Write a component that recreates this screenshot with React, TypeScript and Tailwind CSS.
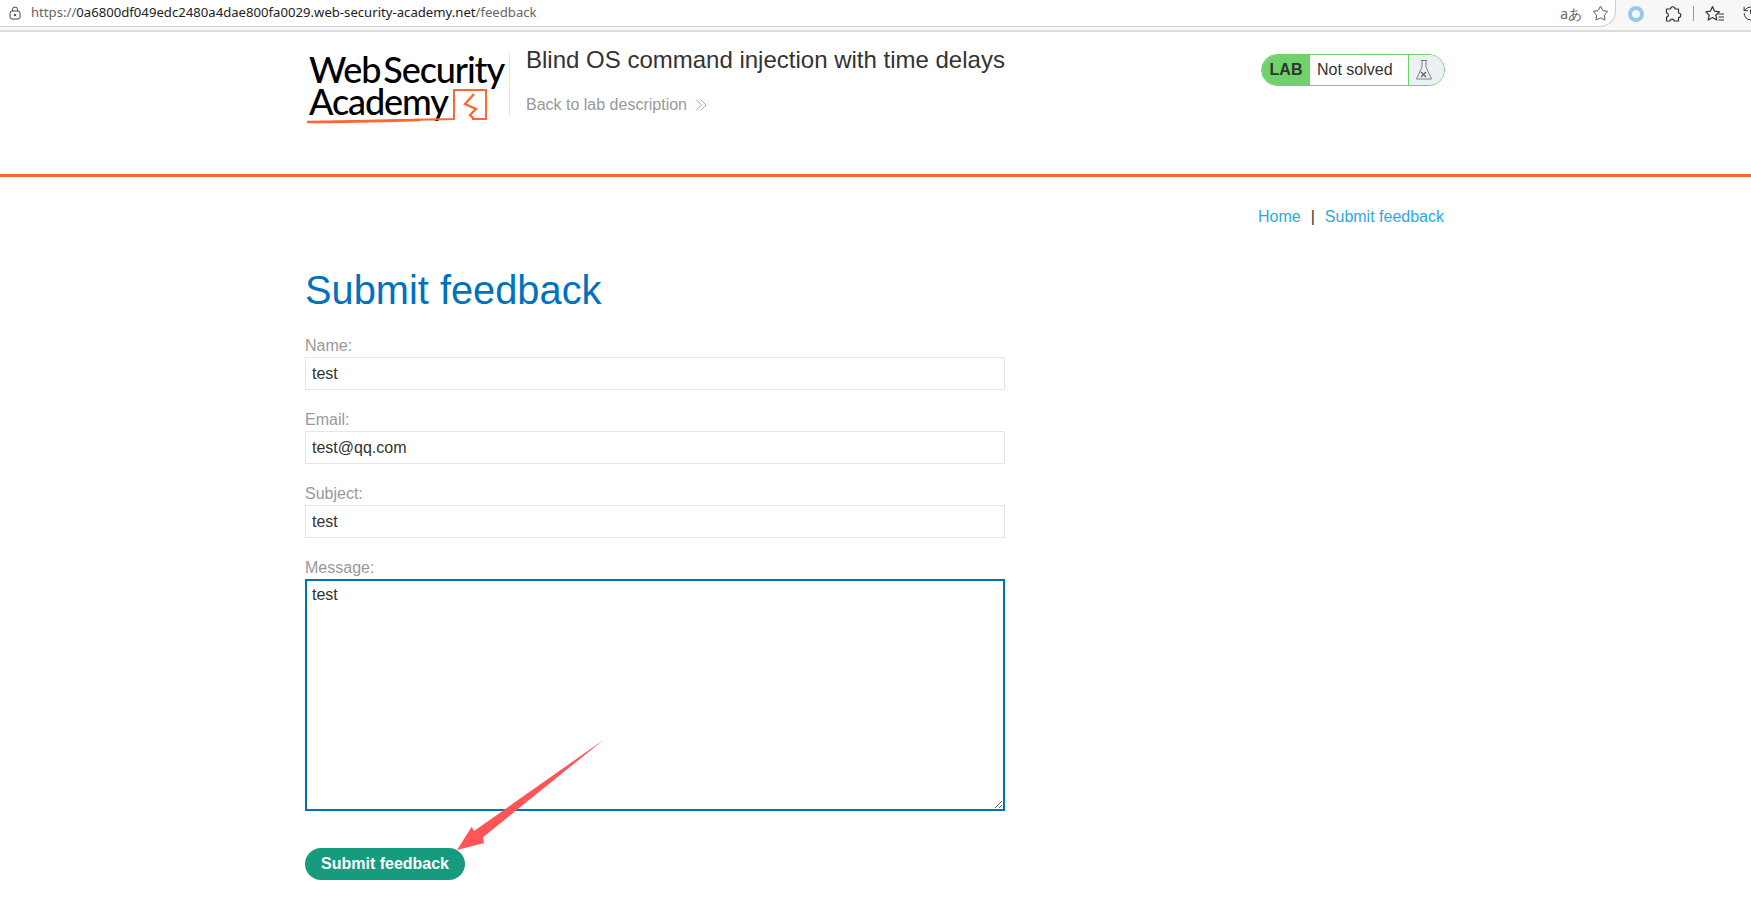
import { Star, History } from "lucide-react";

function Field({ label, value }: { label: string; value: string }) {
  return (
    <div className="mb-[20px]">
      <label className="block text-[16px] leading-[20px] h-[21px] text-[#999]">{label}</label>
      <input
        readOnly
        value={value}
        className="block w-[700px] h-[33px] border border-[#e6e6e6] px-[6px] text-[16px] text-[#333] outline-none"
      />
    </div>
  );
}

function Logo() {
  return (
    <div className="relative w-[198px] h-[70px] text-black font-['Lato',sans-serif] font-medium">
      <div className="text-[36px] leading-[32px] tracking-[-1.1px] [word-spacing:-5px] whitespace-nowrap pl-[4px]">Web Security</div>
      <div className="text-[36px] leading-[32px] tracking-[-1.1px] whitespace-nowrap pl-[4px]">Academy</div>
      <svg className="absolute left-0 top-0" width="198" height="72" viewBox="0 0 198 72" fill="none" stroke="#ff6633">
        <path d="M2 69 C50 68 100 67 149 66 V37 H181 V66 H167" strokeWidth="2" />
        <path d="M2 69 C40 69 80 68 115 67" strokeWidth="2.6" />
        <path d="M169 41 L160 51 L171 56 L165 62 L169 66" strokeWidth="2.4" />
      </svg>
    </div>
  );
}

export default function App() {
  return (
    <div className="relative h-[902px] overflow-hidden bg-white font-['Liberation_Sans',Arial,sans-serif]">
      {/* browser chrome */}
      <div className="flex h-[32px] items-start overflow-hidden bg-[#f7f7f7] border-b-2 border-[#dcdcdc]">
        <div className="flex h-[27px] w-[1616px] shrink-0 items-center rounded-br-[16px] border-b border-r border-[#d0d0d0] bg-white pl-[8px] pr-[6px] font-['Noto_Sans',sans-serif] text-[13.15px]">
          <svg className="mr-[9px]" width="14" height="14" viewBox="0 0 14 14" fill="none" stroke="#444" strokeWidth="1">
            <rect x="2" y="5" width="10" height="8" rx="2" />
            <path d="M4.5 5 V3.5 a2.5 2.5 0 0 1 5 0 V5" />
            <circle cx="7" cy="9" r="0.8" fill="#444" />
          </svg>
          <span className="text-[#666]">https://</span>
          <span className="text-[#222]">0a6800df049edc2480a4dae800fa0029.web-security-academy.net</span>
          <span className="text-[#666]">/feedback</span>
          <span className="ml-auto mr-[10px] text-[14px] text-[#666]">aあ</span>
          <Star size={17} strokeWidth={1.3} className="text-[#444]" />
        </div>
        <div className="flex h-[27px] flex-1 items-center pl-[12px] text-[#333]">
          <span className="h-[16px] w-[16px] shrink-0 rounded-full border-[4px] border-[#93c9f0]" />
          <svg className="ml-[20px] shrink-0" width="18" height="18" viewBox="0 0 18 18" fill="none" stroke="#333" strokeWidth="1.2" strokeLinejoin="round">
            <path d="M6.5 4 C6.5 1 11 1 11 4 H14.5 V8 C17.5 8 17.5 12.5 14.5 12.5 V16 H10 C10 13.5 6 13.5 6 16 H2.5 V12 C5 12 5 8 2.5 8 V4 Z" />
          </svg>
          <span className="ml-[11px] h-[15px] w-px shrink-0 bg-[#999]" />
          <svg className="ml-[11px] shrink-0" width="20" height="18" viewBox="0 0 20 18" fill="none" stroke="#333" strokeWidth="1.2" strokeLinejoin="round">
            <path d="M7.5 1.5 L9.6 6.2 L14.5 6.8 L10.8 10.2 L11.8 15 L7.5 12.6 L3.2 15 L4.2 10.2 L0.8 6.8 L5.4 6.2 Z" />
            <path d="M13.5 9 H19 M13.5 12 H19 M13.5 15 H19" />
          </svg>
          <History size={17} strokeWidth={1.4} className="ml-[17px] shrink-0" />
        </div>
      </div>

      {/* lab header */}
      <header className="h-[145px] border-b-[3px] border-[#ff6633]">
        <div className="ml-[305px] flex w-[1140px] pt-[21px]">
          <Logo />
          <div className="ml-[6px] mt-[1px] h-[62px] border-l border-[#e6e6e6] pl-[16px]">
            <h2 className="-mt-[8px] text-[24px] leading-[28px] text-[#333]">Blind OS command injection with time delays</h2>
            <a className="mt-[21px] flex items-center text-[16px] leading-[20px] text-[#999]">
              Back to lab description
              <svg className="ml-[8px]" width="12" height="12" viewBox="0 0 12 12" fill="none" stroke="#aaa" strokeWidth="1">
                <path d="M1 0.5 L6.5 6 L1 11.5" />
                <path d="M5.5 0.5 L11 6 L5.5 11.5" />
              </svg>
            </a>
          </div>
          <div className="ml-auto mt-[1px] flex h-[32px] w-[184px] overflow-hidden rounded-[16px] border border-[#70d16d] text-[16px]">
            <div className="flex w-[48px] items-center justify-center bg-[#70d16d] font-bold text-[#333]">LAB</div>
            <div className="flex flex-1 items-center pl-[7px] text-[#333]">Not solved</div>
            <div className="flex w-[36px] items-center justify-center border-l border-[#70d16d] bg-[#ebf0f2] pr-[6px]">
              <svg width="18" height="22" viewBox="0 0 18 22" fill="none" stroke="#666" strokeWidth="0.8">
                <path d="M6 1.5 H12 M7 1.5 V8 L1.5 20 H16.5 L11 8 V1.5" />
                <path d="M6 13 L11 18 M11 13 L6 18" strokeWidth="1.4" />
              </svg>
            </div>
          </div>
        </div>
      </header>

      <main className="ml-[305px] w-[1140px]">
        <nav className="flex justify-end pt-[30px] pr-[1px] text-[16px] leading-[20px] text-[#29abe2]">
          <a>Home</a>
          <span className="mx-[10px] text-[#333]">|</span>
          <a>Submit feedback</a>
        </nav>
        <h1 className="mt-[40px] text-[39.8px] leading-[46px] text-[#0071bc]">Submit feedback</h1>
        <form className="mt-[23px] w-[700px]">
          <Field label="Name:" value="test" />
          <Field label="Email:" value="test@qq.com" />
          <Field label="Subject:" value="test" />
          <label className="block text-[16px] leading-[20px] h-[21px] text-[#999]">Message:</label>
          <textarea
            readOnly
            value="test"
            className="block h-[232px] w-[700px] border-2 border-[#0071bc] px-[5px] py-[4px] text-[16px] leading-[20px] text-[#333] outline-none"
          />
          <button type="button" className="mt-[37px] h-[32px] w-[160px] rounded-[16px] bg-[#169b7f] text-[16px] font-bold text-white">
            Submit feedback
          </button>
        </form>
      </main>

      {/* annotation arrow */}
      <svg className="absolute left-0 top-0 pointer-events-none" width="1751" height="902" fill="#ff5555">
        <path d="M604 739.5 L483 837.3 L484 843 L457 850 L471.7 826.7 L474 831 Z" />
      </svg>
    </div>
  );
}
